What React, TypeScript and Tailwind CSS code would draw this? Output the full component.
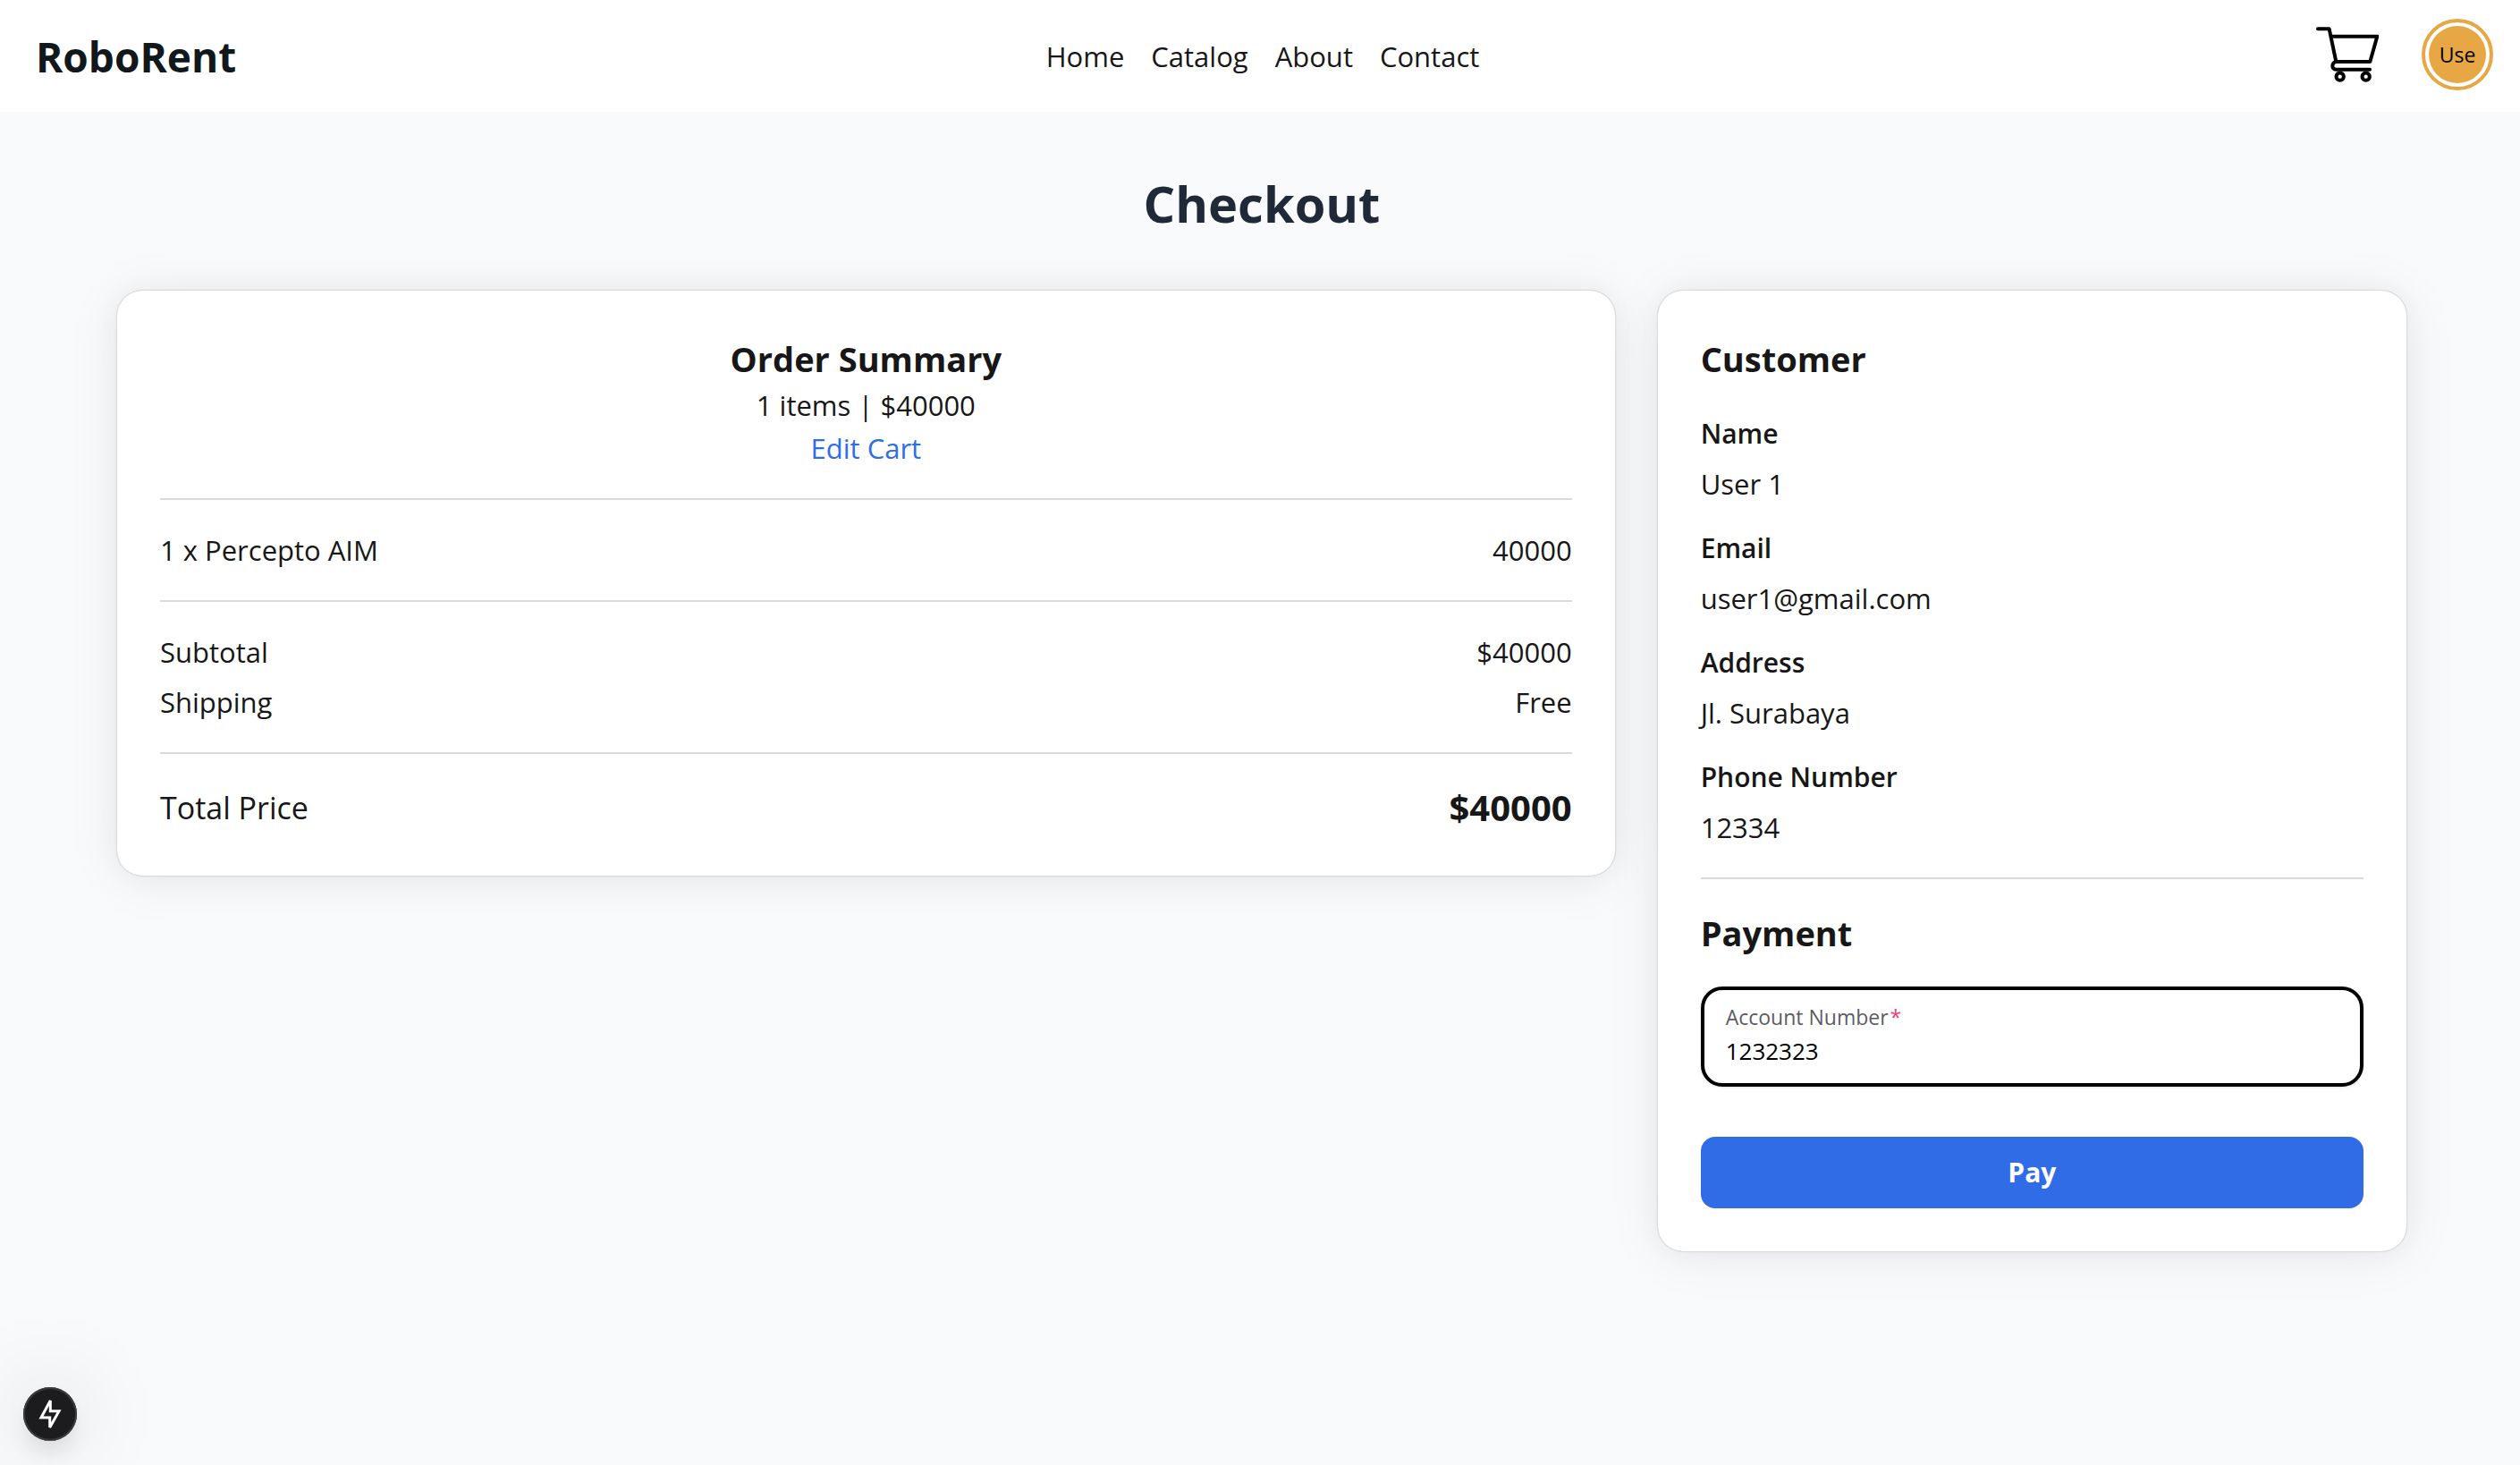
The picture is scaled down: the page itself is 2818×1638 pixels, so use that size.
import type { ReactNode } from "react";

const navLinks = ["Home", "Catalog", "About", "Contact"];

const customer = [
  { label: "Name", value: "User 1" },
  { label: "Email", value: "user1@gmail.com" },
  { label: "Address", value: "Jl. Surabaya" },
  { label: "Phone Number", value: "12334" },
];

function CartIcon() {
  return (
    <svg
      viewBox="30 30 210 186"
      className="h-[62px] w-[70px]"
      fill="none"
      stroke="black"
      strokeWidth="12"
      strokeLinecap="round"
      strokeLinejoin="round"
      aria-hidden="true"
    >
      <path d="M36 37H74L97 147H211L235 62H80" />
      <path d="M97 147C82 148 80 173 97 173H210" />
      <circle cx="110" cy="197" r="12.5" />
      <circle cx="197" cy="197" r="12.5" />
    </svg>
  );
}

function BoltIcon() {
  return (
    <svg
      viewBox="0 0 60 60"
      className="size-full"
      fill="none"
      stroke="white"
      strokeWidth="3"
      strokeMiterlimit="2.2"
      aria-hidden="true"
    >
      <path d="M30.3 15V26.7H40L29.7 45V34H20Z" />
    </svg>
  );
}

function Header() {
  return (
    <header className="grid h-[125px] grid-cols-[1fr_auto_1fr] items-center bg-white pr-[30px] pl-10">
      <a href="#" className="text-[46px] font-bold text-[#11181c]">
        RoboRent
      </a>
      <nav className="flex gap-[30px] pr-1 text-[31px]">
        {navLinks.map((link) => (
          <a key={link} href="#">
            {link}
          </a>
        ))}
      </nav>
      <div className="flex items-center justify-end gap-12 pb-1">
        <a href="#" aria-label="Cart">
          <CartIcon />
        </a>
        <button
          type="button"
          className="flex size-20 items-center justify-center rounded-full border-4 border-[#e8a745] bg-white p-1 text-[23px] text-black"
        >
          <span className="flex size-16 items-center justify-center rounded-full bg-[#e8a745]">
            Use
          </span>
        </button>
      </div>
    </header>
  );
}

function Card({ children }: { children: ReactNode }) {
  return (
    <section className="rounded-[28px] bg-white p-12 shadow-[0_0_30px_rgba(0,0,0,0.03),0_4px_60px_rgba(0,0,0,0.08),0_0_2px_rgba(0,0,0,0.3)]">
      {children}
    </section>
  );
}

function Divider() {
  return <hr className="my-8 border-t-2 border-[#dadada]" />;
}

function Row({ label, value }: { label: string; value: string }) {
  return (
    <div className="flex justify-between">
      <dt>{label}</dt>
      <dd>{value}</dd>
    </div>
  );
}

function OrderSummary() {
  return (
    <Card>
      <div className="text-center">
        <h2 className="text-[38px] leading-[56px] font-bold">Order Summary</h2>
        <p>1 items | $40000</p>
        <a href="#" className="block text-[#2f6de7]">
          Edit Cart
        </a>
      </div>
      <Divider />
      <dl>
        <Row label="1 x Percepto AIM" value="40000" />
      </dl>
      <Divider />
      <dl className="flex flex-col gap-2">
        <Row label="Subtotal" value="$40000" />
        <Row label="Shipping" value="Free" />
      </dl>
      <Divider />
      <dl className="flex items-center justify-between leading-[56px]">
        <dt className="text-[34px]">Total Price</dt>
        <dd className="text-[40px] font-bold">$40000</dd>
      </dl>
    </Card>
  );
}

function CustomerPanel() {
  return (
    <Card>
      <h2 className="mb-8 text-[38px] leading-[56px] font-bold">Customer</h2>
      <dl className="flex flex-col gap-6">
        {customer.map(({ label, value }) => (
          <div key={label} className="flex flex-col gap-2">
            <dt className="text-[30px] font-semibold">{label}</dt>
            <dd>{value}</dd>
          </div>
        ))}
      </dl>
      <Divider />
      <form>
        <h2 className="mb-8 text-[38px] leading-[56px] font-bold">Payment</h2>
        <div className="flex h-28 flex-col justify-center rounded-3xl border-4 border-black bg-white px-6 pb-1 shadow-sm">
          <label htmlFor="account" className="text-[23px] leading-9 text-[#5c5c64]">
            Account Number
            <span className="ml-0.5 text-[#e8417a]">*</span>
          </label>
          <input
            id="account"
            type="text"
            required
            defaultValue="1232323"
            className="w-full bg-transparent text-[26px] leading-10 text-black outline-none"
          />
        </div>
        <button
          type="button"
          className="mt-14 h-20 w-full rounded-2xl bg-[#2f6ce5] text-[30px] font-bold text-white"
        >
          Pay
        </button>
      </form>
    </Card>
  );
}

export default function App() {
  return (
    <div className="min-h-screen bg-[#f9fafc] font-['Open_Sans','Noto_Sans',sans-serif] text-[31px] leading-[48px] text-[#171717]">
      <Header />
      <main className="pt-16 pb-20 pl-1">
        <h1 className="mb-15 text-center text-[56px] leading-[76px] font-bold text-[#1f2937]">
          Checkout
        </h1>
        <div className="mx-auto grid max-w-[2560px] grid-cols-[2fr_1fr] items-start gap-12">
          <OrderSummary />
          <CustomerPanel />
        </div>
      </main>
      <button
        type="button"
        aria-label="Open developer tools"
        className="fixed bottom-[27px] left-[26px] size-[60px] rounded-full bg-[#1c1c1e] shadow-[inset_0_0_0_2px_#3c3c3e,0_16px_32px_-8px_rgba(0,0,0,0.16),0_0_100px_rgba(0,0,0,0.2)]"
      >
        <BoltIcon />
      </button>
    </div>
  );
}
